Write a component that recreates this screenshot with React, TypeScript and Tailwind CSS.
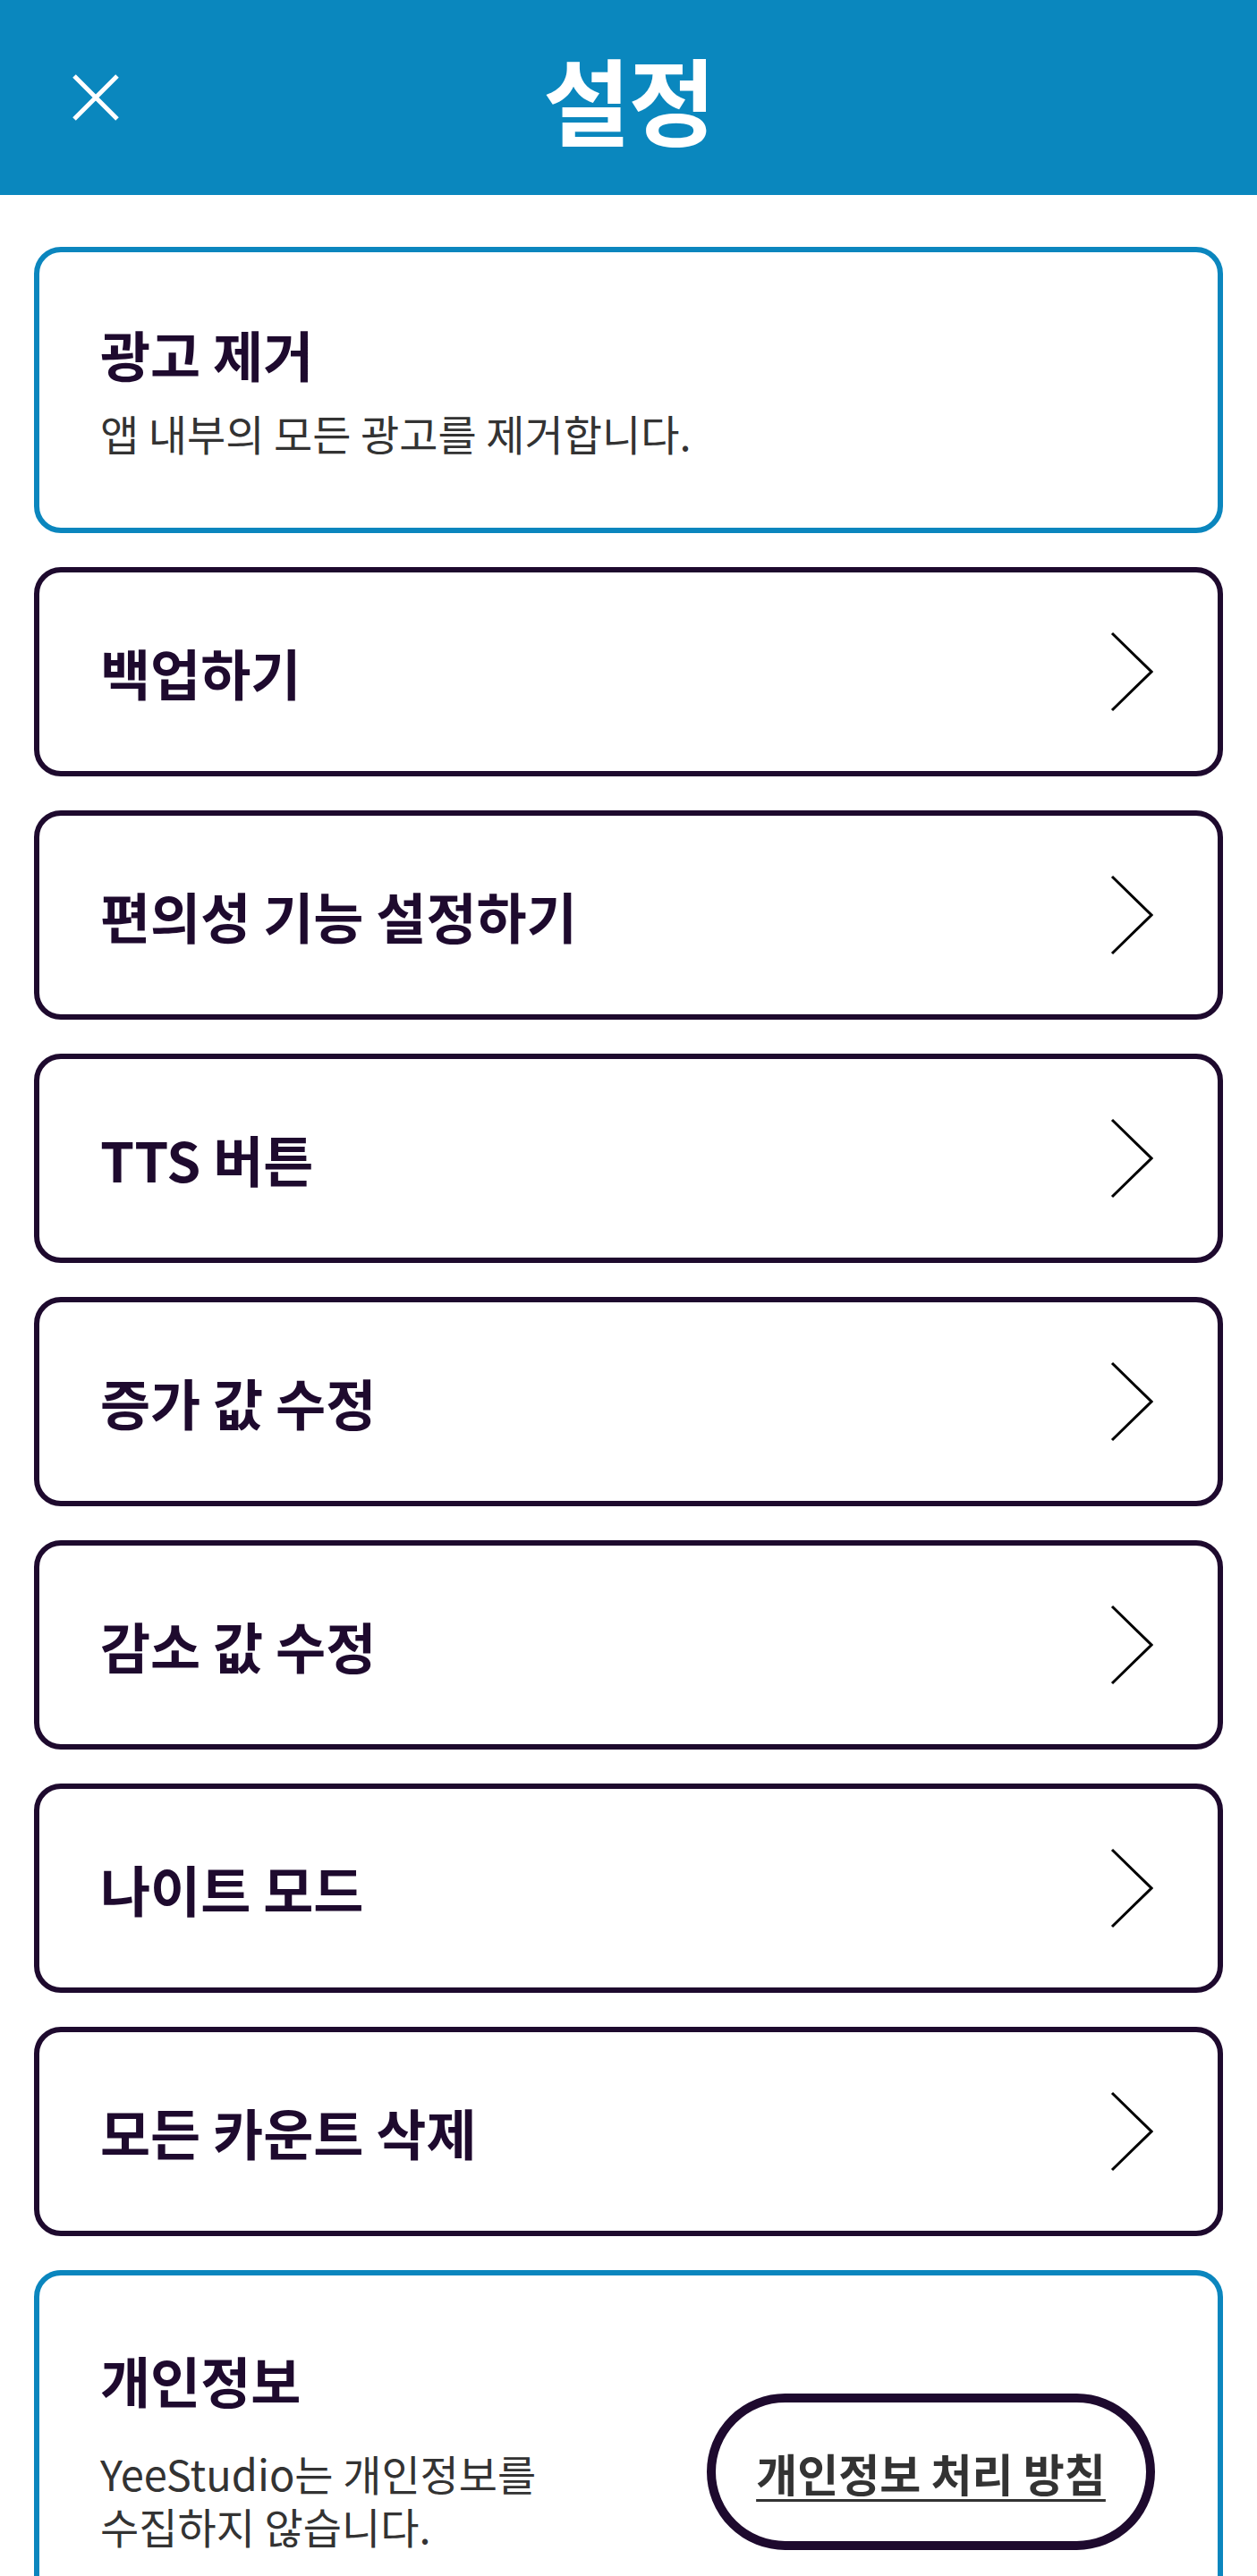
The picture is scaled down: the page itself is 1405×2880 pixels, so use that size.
import React from "react";

const navItems = [
  "백업하기",
  "편의성 기능 설정하기",
  "TTS 버튼",
  "증가 값 수정",
  "감소 값 수정",
  "나이트 모드",
  "모든 카운트 삭제",
];

const Chevron = () => (
  <svg width="48" height="90" viewBox="0 0 48 90" fill="none">
    <polyline points="2,2 46,45 2,88" stroke="#000" strokeWidth="3" />
  </svg>
);

const NavCard = ({ label }: { label: string }) => (
  <div className="h-[234px] rounded-[30px] border-[6px] border-[#1e0a2e] flex items-center justify-between pl-[68px] pr-[72px]">
    <span className="text-[61px] font-bold leading-none text-[#1e0a2e]">{label}</span>
    <Chevron />
  </div>
);

export default function App() {
  return (
    <div className="h-[2880px] overflow-hidden bg-white font-['Noto_Sans_CJK_KR','Noto_Sans',sans-serif]">
      {/* 상단 바 */}
      <header className="h-[218px] bg-[#0a87be] grid grid-cols-[1fr_auto_1fr] items-center">
        <div className="pl-[80px]">
          <svg width="54" height="54" viewBox="0 0 54 54" fill="none">
            <path d="M3 3 L51 51 M51 3 L3 51" stroke="#fff" strokeWidth="5" />
          </svg>
        </div>
        <h1 className="text-[106px] font-bold leading-none text-white tracking-[-2px]">설정</h1>
        <div />
      </header>

      <main className="px-[38px] pt-[58px] flex flex-col gap-[38px]">
        {/* 광고 제거 */}
        <div className="h-[320px] rounded-[30px] border-[6px] border-[#0b86be] pl-[68px] flex flex-col justify-center gap-[34px]">
          <div className="text-[61px] font-bold leading-none text-[#1e0a2e]">광고 제거</div>
          <div className="text-[47px] leading-none text-[#333333]">앱 내부의 모든 광고를 제거합니다.</div>
        </div>

        {navItems.map((item) => (
          <NavCard key={item} label={item} />
        ))}

        {/* 개인정보 */}
        <div className="h-[420px] rounded-[30px] border-[6px] border-[#0b86be] pl-[68px] pr-[70px] pt-[86px]">
          <div className="text-[61px] font-bold leading-none text-[#1e0a2e]">개인정보</div>
          <div className="flex items-start justify-between">
            <div className="mt-[50px] flex flex-col gap-[12px] text-[47px] leading-none text-[#333333]">
              <span>YeeStudio는 개인정보를</span>
              <span>수집하지 않습니다.</span>
            </div>
            <button className="mt-[-15px] w-[501px] h-[175px] rounded-full border-[10px] border-[#1e0a2e] flex items-center justify-center">
              <span className="text-[50px] font-semibold leading-none text-[#333333] underline underline-offset-[8px] decoration-[3px]">
                개인정보 처리 방침
              </span>
            </button>
          </div>
        </div>
      </main>
    </div>
  );
}
